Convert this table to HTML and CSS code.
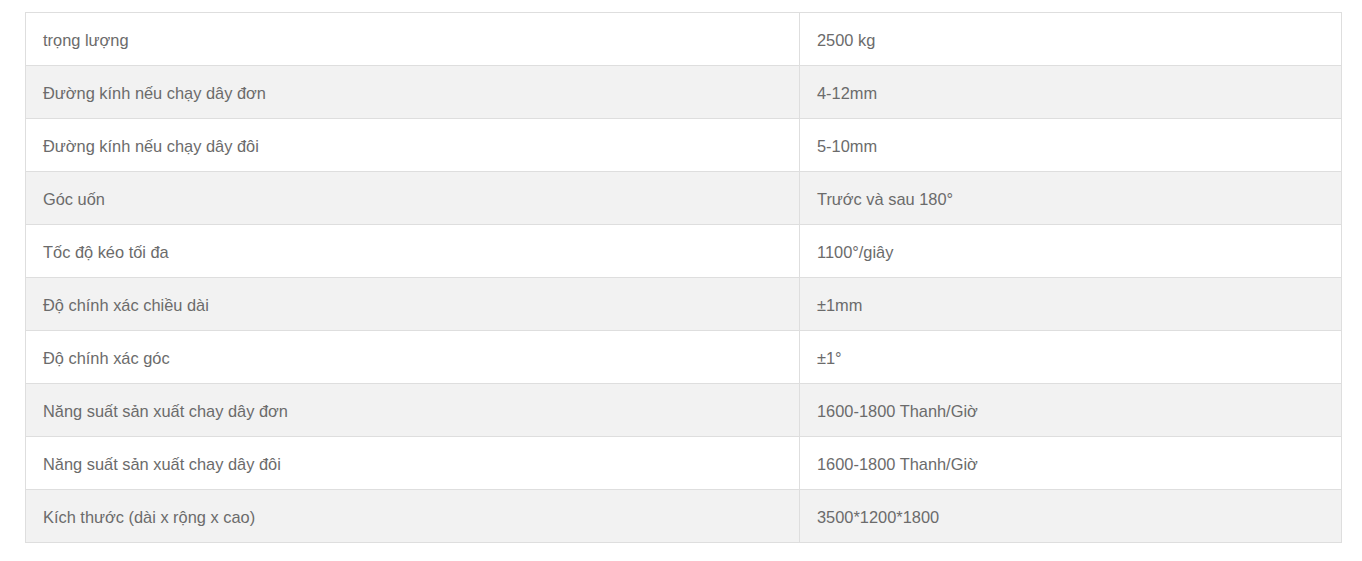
FILE: index.html
```html
<!DOCTYPE html>
<html lang="vi">
<head>
<meta charset="utf-8">
<link rel="stylesheet" href="styles.css">
</head>
<body>
<table class="spec">
<colgroup><col class="c1"><col class="c2"></colgroup>
<tbody>
<tr><td>trọng lượng</td><td>2500 kg</td></tr>
<tr><td>Đường kính nếu chạy dây đơn</td><td>4-12mm</td></tr>
<tr><td>Đường kính nếu chạy dây đôi</td><td>5-10mm</td></tr>
<tr><td>Góc uốn</td><td>Trước và sau 180°</td></tr>
<tr><td>Tốc độ kéo tối đa</td><td>1100°/giây</td></tr>
<tr><td>Độ chính xác chiều dài</td><td>±1mm</td></tr>
<tr><td>Độ chính xác góc</td><td>±1°</td></tr>
<tr><td>Năng suất sản xuất chay dây đơn</td><td>1600-1800 Thanh/Giờ</td></tr>
<tr><td>Năng suất sản xuất chay dây đôi</td><td>1600-1800 Thanh/Giờ</td></tr>
<tr><td>Kích thước (dài x rộng x cao)</td><td>3500*1200*1800</td></tr>
</tbody>
</table>
</body>
</html>
```
FILE: styles.css
```css
html, body {
  margin: 0;
  background: #fff;
}
body {
  padding: 12px 0 0 25px;
  font-family: "Liberation Sans", Arial, sans-serif;
}
.spec {
  border-collapse: collapse;
  table-layout: fixed;
  width: 1316px;
}
.spec .c1 { width: 774px; }
.spec .c2 { width: 542px; }
.spec td {
  border: 1px solid #dedede;
  padding: 16px 17px 14px;
  font-size: 16.4px;
  line-height: 22px;
  color: #6b6b6b;
  text-align: left;
  vertical-align: middle;
}
.spec tr:nth-child(even) td {
  background: #f2f2f2;
}
```
